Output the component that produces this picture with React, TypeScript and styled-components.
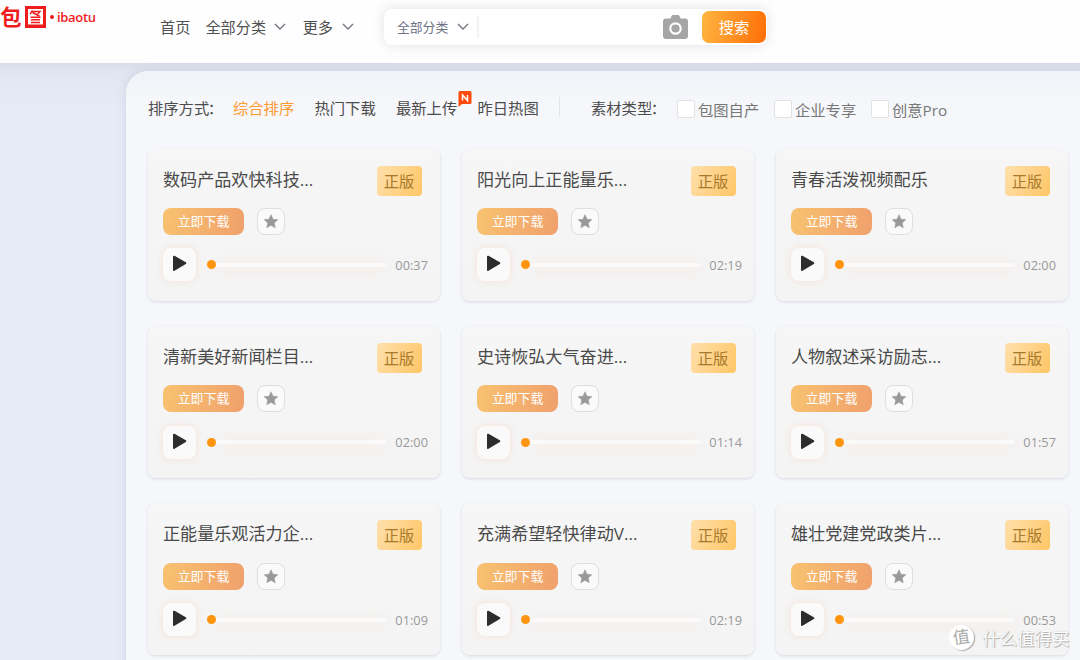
import React from 'react';
import styled, { createGlobalStyle } from 'styled-components';

const Global = createGlobalStyle`
  * { box-sizing: border-box; }
  html, body { margin: 0; padding: 0; }
  body {
    width: 1080px; height: 660px; overflow: hidden;
    background: #e7ebf5;
    font-family: "Open Sans", "Noto Sans CJK SC", sans-serif;
    color: #4a4a4a;
  }
`;

const Page = styled.div`
  position: relative;
  width: 1080px; height: 660px; overflow: hidden;
  background: linear-gradient(180deg, #d9dde8 63px, #e2e6f0 74px, #e7ebf5 110px);
`;
const Header = styled.header`
  display: flex; align-items: flex-start;
  height: 63px; background: #fefefe;
`;
const Logo = styled.div`
  display: flex; align-items: center;
  width: 160px; height: 34px; color: #ee1c1c;
`;
const LogoSign = styled.span`
  width: 21px; line-height: 30px; margin-bottom: 1px;
  font-size: 21.5px; font-weight: 700;
`;
const LogoSeal = styled.svg`display: block; margin: 0 4px 0 4px;`;
const LogoDot = styled.i`
  width: 4px; height: 4px; border-radius: 2px; background: #ee1c1c;
`;
const LogoWord = styled.span`
  margin-left: 3px; font-size: 13px; font-weight: 600; line-height: 34px; letter-spacing: -0.3px;
`;
const Nav = styled.nav`
  display: flex; align-items: center; width: 224px; height: 52px;
  font-size: 15.2px; color: #505050; white-space: nowrap;
`;
const NavItem = styled.span<{ $gap: number }>`
  display: flex; align-items: center; margin-right: ${p => p.$gap}px;
`;
const Chevron = styled.svg<{ $ml: number }>`margin: 1px 0 0 ${p => p.$ml}px; display: block;`;

const Search = styled.div`
  display: flex; align-items: center;
  width: 383px; height: 36px; margin-top: 9px; padding-right: 1px;
  border-radius: 8px; background: #fff;
  box-shadow: 0 0 12px rgba(120, 125, 160, 0.22);
`;
const Category = styled.div`
  display: flex; align-items: center; width: 95px; height: 22px; padding: 0 0 2px 13px;
  font-size: 12.8px; color: #6e7285; border-right: 2px solid #f1f1f6; white-space: nowrap;
`;
const Field = styled.div`flex: 1;`;
const Camera = styled.svg`display: block; margin-right: 14px;`;
const SearchButton = styled.button`
  width: 64px; height: 32px; padding: 0 0 2px; border: 0; border-radius: 7px;
  font: 400 15.2px "Noto Sans CJK SC", sans-serif; color: #fff;
  background: linear-gradient(100deg, #ffb541, #ff6e06);
`;

const Panel = styled.main`
  width: 970px; height: 610px; margin: 8px 0 0 126px; padding: 17px 0 0 22px;
  border-radius: 22px 0 0 0;
  background: linear-gradient(180deg, #f2f3f8, #f6f7fb 30px);
  box-shadow: 0 0 10px rgba(160, 166, 200, 0.35);
`;
const Filters = styled.div`
  display: flex; align-items: center; height: 38px;
  font-size: 15.3px; color: #4c4c4c; white-space: nowrap;
`;
const FilterLabel = styled.span<{ $w: number }>`width: ${p => p.$w}px;`;
const Colon = styled.span`margin-left: -1.5px;`;
const Sort = styled.span<{ $w: number; $active?: boolean }>`
  position: relative; width: ${p => p.$w}px;
  color: ${p => (p.$active ? '#ff9a35' : '#4c4c4c')};
`;
const NewBadge = styled.svg`position: absolute; left: 61.5px; top: -5px;`;
const Divider = styled.i`width: 1px; height: 20px; background: #e2e3e8; margin-right: 31px;`;
const Check = styled.label`
  display: flex; align-items: center; width: 97px; padding-top: 4px; color: #777;
`;
const Box = styled.i`
  width: 18px; height: 18px; margin: 0 3px 0 0; flex: none;
  border: 1px solid #e2e2e2; border-radius: 2px; background: #fff;
`;

const Grid = styled.div`
  display: grid; grid-template-columns: repeat(3, 291.5px);
  grid-auto-rows: 152px; gap: 25.4px 22.5px; margin-top: 22.5px;
`;
const Card = styled.article`
  padding: 17px 11.5px 0 15px; border-radius: 8px;
  background: linear-gradient(180deg, #f6f6f6, #f4f4f4);
  box-shadow: 0 1px 3px rgba(60, 60, 80, 0.16);
`;
const CardTop = styled.div`
  display: flex; justify-content: space-between; height: 30px; padding-right: 6.5px;
`;
const Title = styled.h3`
  margin: 0; font-size: 17.1px; line-height: 28px; font-weight: 400; color: #4a4a4a; white-space: nowrap;
`;
const License = styled.span`
  width: 45px; height: 30px; border-radius: 4px; text-align: center;
  font-size: 15.3px; line-height: 30px; color: #a8792b;
  background: linear-gradient(115deg, #ffe0ac, #ffc666);
`;
const Actions = styled.div`display: flex; align-items: center; gap: 13px; height: 27px; margin-top: 12.6px;`;
const Download = styled.button`
  width: 81px; height: 27px; padding: 0 0 2px; border: 0; border-radius: 8px;
  font: 400 12.9px "Noto Sans CJK SC", sans-serif; color: #fff;
  background: linear-gradient(100deg, #f8c270, #f0a06c);
`;
const Favorite = styled.button`
  display: grid; place-items: center; width: 28px; height: 27px; padding: 0;
  border: 1px solid #dedede; border-radius: 8px; background: #fafafa;
`;
const Player = styled.div`display: flex; align-items: center; height: 34px; margin-top: 12.9px;`;
const Play = styled.button`
  display: grid; place-items: center; width: 33px; height: 33px; padding: 0 0 2px;
  border: 0; border-radius: 8px; background: #fafafa;
  box-shadow: 0 0 7px rgba(245, 160, 120, 0.22);
`;
const Knob = styled.i`width: 9px; height: 9px; margin-left: 11px; border-radius: 50%; background: #ff950f;`;
const Track = styled.i`
  width: 171px; height: 4px; border-radius: 0 2px 2px 0; background: #fafafa;
  box-shadow: 0 2px 14px rgba(245, 160, 110, 0.18);
`;
const Time = styled.span`flex: 1; text-align: right; font-size: 12.8px; color: #999;`;

const Watermark = styled.div`
  position: absolute; left: 949px; top: 624px; display: flex; align-items: center;
  height: 26px; color: #fff; font-size: 17.5px; white-space: nowrap;
  text-shadow: 1px 1px 1px #aaa, 0 0 1px #bbb;
`;
const Seal = styled.span`
  width: 25px; height: 25px; margin-right: 8px; border-radius: 50%; background: #fff;
  box-shadow: 1px 1px 1px #aaa; color: #aaa; text-align: center;
  font-size: 17px; line-height: 23px; text-shadow: none; transform: rotate(-8deg);
`;

const Down = ({ ml }: { ml: number }) => (
  <Chevron $ml={ml} width="12" height="8" viewBox="0 0 12 8" fill="none" stroke="#747783" strokeWidth="1.4">
    <path d="M1 1l5 5 5-5" />
  </Chevron>
);

const tracks: [string, string][] = [
  ['数码产品欢快科技...', '00:37'], ['阳光向上正能量乐...', '02:19'], ['青春活泼视频配乐', '02:00'],
  ['清新美好新闻栏目...', '02:00'], ['史诗恢弘大气奋进...', '01:14'], ['人物叙述采访励志...', '01:57'],
  ['正能量乐观活力企...', '01:09'], ['充满希望轻快律动V...', '02:19'], ['雄壮党建党政类片...', '00:53'],
];

const TrackCard = ({ title, time }: { title: string; time: string }) => (
  <Card>
    <CardTop><Title>{title}</Title><License>正版</License></CardTop>
    <Actions>
      <Download>立即下载</Download>
      <Favorite>
        <svg width="16" height="15" viewBox="0 0 16 15" fill="#999">
          <path d="M8 .8l2 4.4 4.8.5-3.6 3.2 1 4.8L8 11.3l-4.2 2.4 1-4.8L1.2 5.7 6 5.2z" stroke="#999" strokeWidth=".6" strokeLinejoin="round" />
        </svg>
      </Favorite>
    </Actions>
    <Player>
      <Play>
        <svg width="15" height="17" viewBox="0 0 15 17">
          <path d="M2 1.7L13.3 8.2 2 14.900z" fill="#2d2d2d" stroke="#2d2d2d" strokeWidth="2" strokeLinejoin="round" />
        </svg>
      </Play>
      <Knob /><Track />
      <Time>{time}</Time>
    </Player>
  </Card>
);

export default function App() {
  return (
    <Page>
      <Global />
      <Header>
        <Logo>
          <LogoSign>包</LogoSign>
          <LogoSeal width="21" height="22" viewBox="0 0 21 22" fill="none">
            <path d="M0 0h21v22H0z" fill="#ee1c1c" />
            <path d="M3 3h15v15.500H3z" fill="#fff" />
            <path d="M7.500 4.500L5 8M7 5.500h8l-3.500 4M7.500 6.500l7 3.500M5.500 11.200h10M6 13.800h9M6 16.500h9" stroke="#ee1c1c" strokeWidth="1.400" />
          </LogoSeal>
          <LogoDot />
          <LogoWord>ibaotu</LogoWord>
        </Logo>
        <Nav>
          <NavItem $gap={15}>首页</NavItem>
          <NavItem $gap={16.5}>全部分类<Down ml={8} /></NavItem>
          <NavItem $gap={0}>更多<Down ml={8.5} /></NavItem>
        </Nav>
        <Search>
          <Category>全部分类<Down ml={9} /></Category>
          <Field />
          <Camera width="25" height="24" viewBox="0 0 25 24">
            <path d="M7.500 3.500L8.500 1Q9 0 10 0h5q1 0 1.500 1l1 2.500H22a3 3 0 0 1 3 3V21a3 3 0 0 1-3 3H3a3 3 0 0 1-3-3V6.500a3 3 0 0 1 3-3z" fill="#a5a5a5" />
            <circle cx="12.500" cy="13.500" r="5.200" fill="none" stroke="#fff" strokeWidth="2.200" />
          </Camera>
          <SearchButton>搜索</SearchButton>
        </Search>
      </Header>
      <Panel>
        <Filters>
          <FilterLabel $w={85}>排序方式<Colon>：</Colon></FilterLabel>
          <Sort $w={81.5} $active>综合排序</Sort>
          <Sort $w={81.5}>热门下载</Sort>
          <Sort $w={81.5}>
            最新上传
            <NewBadge width="14" height="16" viewBox="0 0 14 16">
              <path d="M2 0h10a1.500 1.500 0 0 1 1.500 1.500v10A1.500 1.500 0 0 1 12 13H4L.5 16V1.500A1.500 1.500 0 0 1 2 0z" fill="#ff4a0c" />
              <path d="M4.500 9.500V4l5 5.500V4" fill="none" stroke="#fff" strokeWidth="1.500" />
            </NewBadge>
          </Sort>
          <Sort $w={81.5}>昨日热图</Sort>
          <Divider />
          <FilterLabel $w={86}>素材类型<Colon>：</Colon></FilterLabel>
          <Check><Box />包图自产</Check>
          <Check><Box />企业专享</Check>
          <Check><Box />创意Pro</Check>
        </Filters>
        <Grid>
          {tracks.map(([title, time]) => <TrackCard key={title} title={title} time={time} />)}
        </Grid>
      </Panel>
      <Watermark><Seal>值</Seal>什么值得买</Watermark>
    </Page>
  );
}
